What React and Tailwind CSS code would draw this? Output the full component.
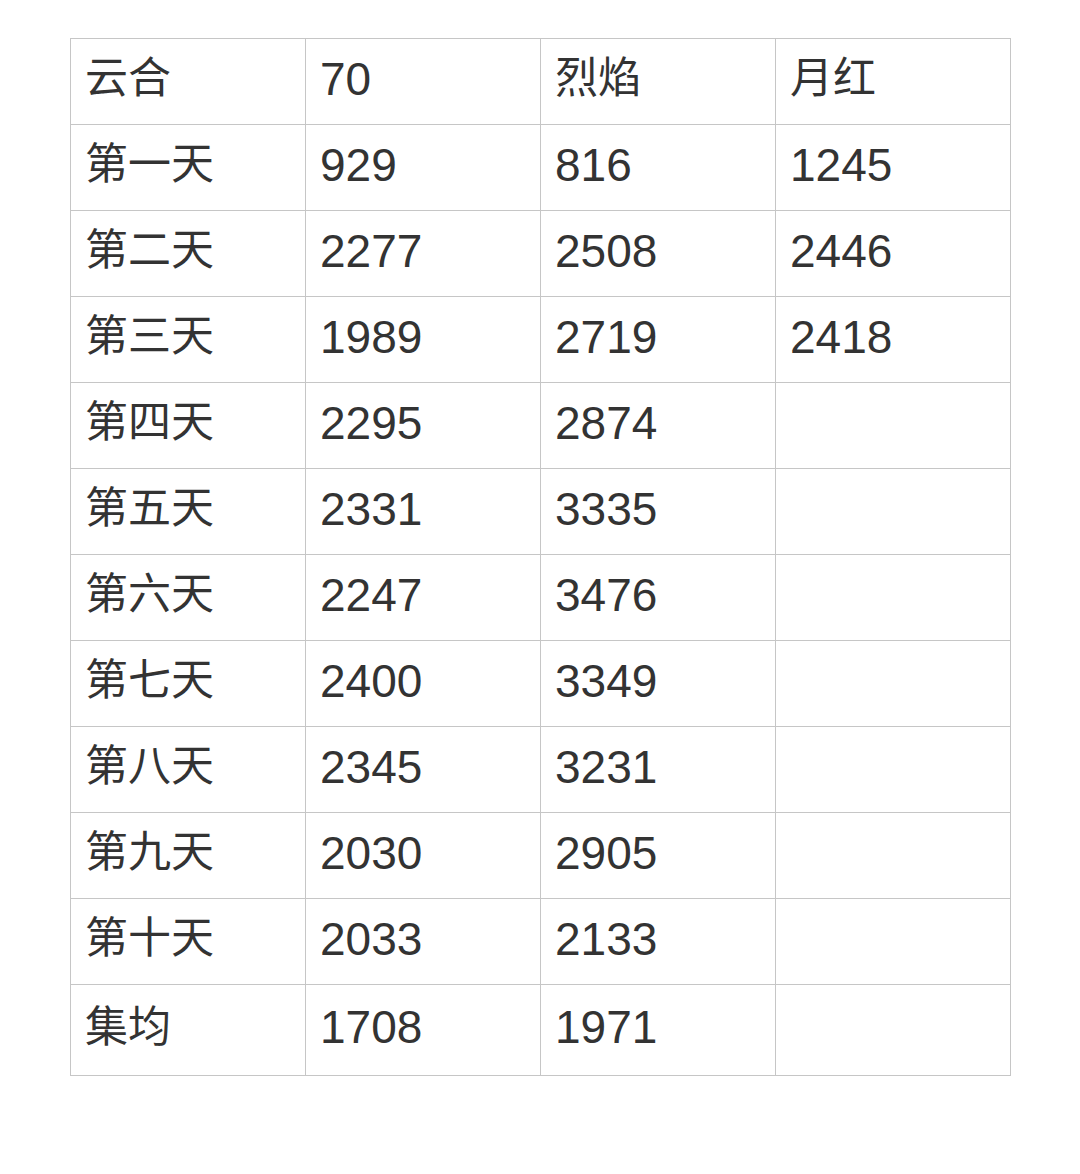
const rows = [
  ['云合', '70', '烈焰', '月红'],
  ['第一天', '929', '816', '1245'],
  ['第二天', '2277', '2508', '2446'],
  ['第三天', '1989', '2719', '2418'],
  ['第四天', '2295', '2874', ''],
  ['第五天', '2331', '3335', ''],
  ['第六天', '2247', '3476', ''],
  ['第七天', '2400', '3349', ''],
  ['第八天', '2345', '3231', ''],
  ['第九天', '2030', '2905', ''],
  ['第十天', '2033', '2133', ''],
  ['集均', '1708', '1971', ''],
];

export default function App() {
  return (
    <div className="w-[1080px] h-[1174px] bg-white pt-[38px] pl-[70px]" style={{ fontFamily: '"Liberation Sans", "Noto Sans CJK SC", sans-serif' }}>
      <table className="border-collapse table-fixed w-[939px] text-[#333333]">
        <tbody>
          {rows.map((r, i) => (
            <tr key={i} className={i === rows.length - 1 ? 'h-[91px]' : 'h-[86px]'}>
              {r.map((c, j) => (
                <td
                  key={j}
                  className={`border border-[#c6c6c6] w-[235px] pl-[14px] pb-[6px] align-middle leading-none ${/^\d*$/.test(c) ? 'text-[46px]' : 'text-[43px]'}`}
                >
                  {c}
                </td>
              ))}
            </tr>
          ))}
        </tbody>
      </table>
    </div>
  );
}
